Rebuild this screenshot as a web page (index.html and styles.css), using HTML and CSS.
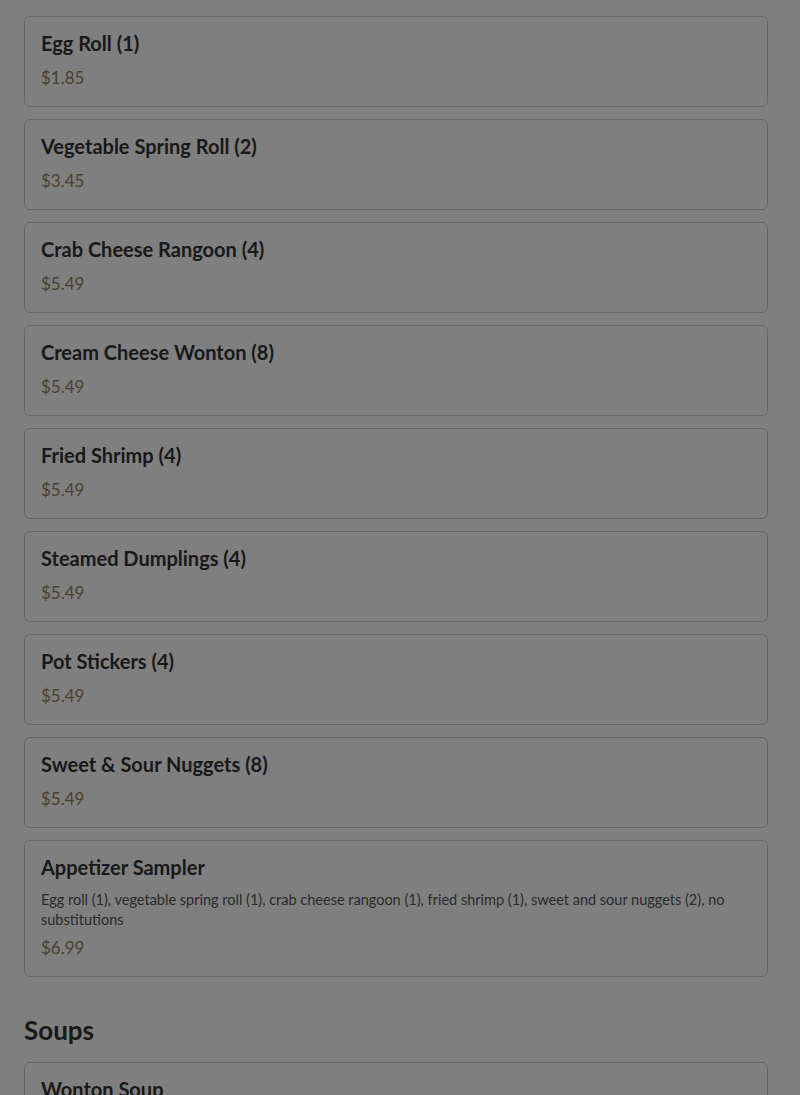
FILE: index.html
```html
<!DOCTYPE html>
<html lang="en">
<head>
<meta charset="utf-8">
<title>Menu</title>
<link rel="stylesheet" href="styles.css">
</head>
<body>
<main class="menu">
  <section class="category">
    <div class="item"><h3 class="item-name">Egg Roll (1)</h3><p class="item-price">$1.85</p></div>
    <div class="item"><h3 class="item-name">Vegetable Spring Roll (2)</h3><p class="item-price">$3.45</p></div>
    <div class="item"><h3 class="item-name">Crab Cheese Rangoon (4)</h3><p class="item-price">$5.49</p></div>
    <div class="item"><h3 class="item-name">Cream Cheese Wonton (8)</h3><p class="item-price">$5.49</p></div>
    <div class="item"><h3 class="item-name">Fried Shrimp (4)</h3><p class="item-price">$5.49</p></div>
    <div class="item"><h3 class="item-name">Steamed Dumplings (4)</h3><p class="item-price">$5.49</p></div>
    <div class="item"><h3 class="item-name">Pot Stickers (4)</h3><p class="item-price">$5.49</p></div>
    <div class="item"><h3 class="item-name">Sweet &amp; Sour Nuggets (8)</h3><p class="item-price">$5.49</p></div>
    <div class="item"><h3 class="item-name">Appetizer Sampler</h3><p class="item-desc">Egg roll (1), vegetable spring roll (1), crab cheese rangoon (1), fried shrimp (1), sweet and sour nuggets (2), no substitutions</p><p class="item-price">$6.99</p></div>
  </section>
  <section class="category">
    <h2 class="category-title">Soups</h2>
    <div class="item"><h3 class="item-name">Wonton Soup</h3><p class="item-price">$3.99</p></div>
  </section>
</main>
<div class="overlay"></div>
</body>
</html>
```
FILE: styles.css
```css
html, body {
  margin: 0;
  padding: 0;
  background: #ffffff;
  height: 1095px;
  overflow: hidden;
}
body {
  font-family: "Lato", "Noto Sans", sans-serif;
  color: #333333;
}
.menu {
  padding: 16px 32px 0 24px;
}
.category {
  display: flex;
  flex-direction: column;
  gap: 12px;
}
.category + .category {
  margin-top: 36px;
}
.category-title {
  margin: 0 0 3px;
  font-size: 26px;
  line-height: 34px;
  font-weight: 700;
  color: #333333;
}
.item {
  border: 1px solid #cccccc;
  border-radius: 6px;
  padding: 16px;
  display: flex;
  flex-direction: column;
}
.item-name {
  margin: 0 0 13px;
  font-size: 20px;
  line-height: 20px;
  font-weight: 700;
  color: #333333;
}
.item-desc {
  margin: 0 0 7px;
  font-size: 14.5px;
  line-height: 19.5px;
  color: #555555;
}
.item-price {
  margin: 0;
  font-size: 17px;
  line-height: 24px;
  color: #968259;
}
.overlay {
  position: fixed;
  inset: 0;
  background: rgba(0, 0, 0, 0.5);
}
```
